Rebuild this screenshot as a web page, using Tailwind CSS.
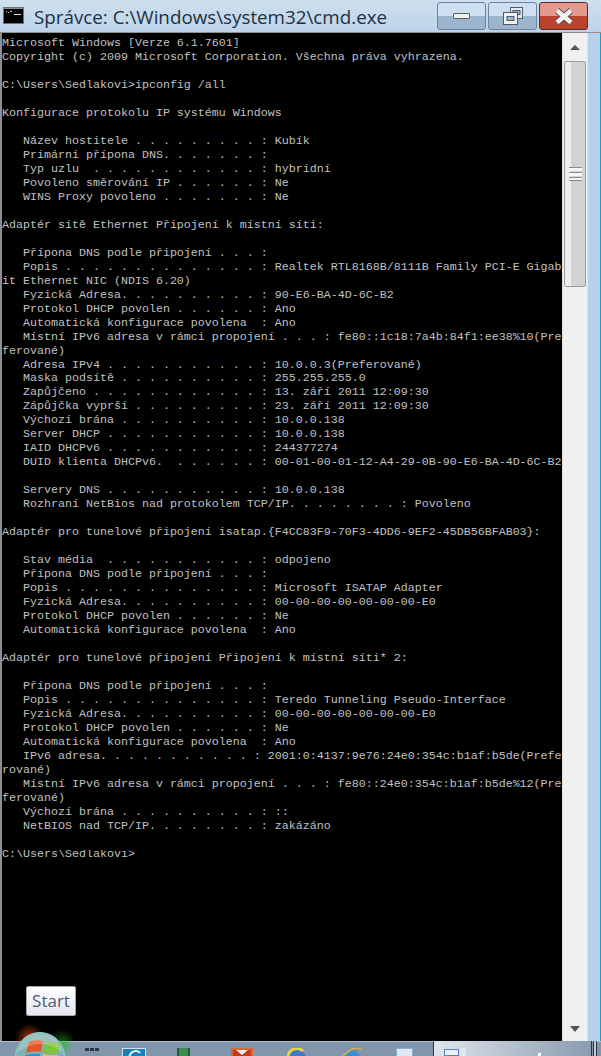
<!DOCTYPE html>
<html lang="en">
<head>
    <meta charset="UTF-8">
    <meta name="viewport" content="width=device-width, initial-scale=1.0">
    <title>Správce: C:\Windows\system32\cmd.exe</title>
    <script src="https://cdn.jsdelivr.net/npm/@tailwindcss/browser@4"></script>
</head>
<body class="bg-black">

<div class="relative w-[601px] h-[1056px] overflow-hidden flex flex-col bg-black">

    <!-- title bar -->
    <div class="h-[33px] shrink-0 flex items-start bg-gradient-to-b from-[#cfdfee] to-[#bcd4ea] border-b border-[#8a8f94]">
        <div class="ml-[3px] mt-[7px] w-[21px] h-[17px] bg-black border border-[#6d7178] shadow-[inset_0_1px_0_#8a8f94]">
            <svg width="19" height="15" viewBox="0 0 19 15"><path d="M2 3h1v1H2zM4 4h1v1H4zM6 3h2v1H6zM10 6h7v1h-7z" fill="#d8d8d8"/></svg>
        </div>
        <div class="ml-[10px] mt-[3px] text-[18.8px] leading-[29px] text-[#20303f] font-['Open_Sans','Noto_Sans',sans-serif] whitespace-nowrap">Správce: C:\Windows\system32\cmd.exe</div>
        <div class="ml-auto mr-[13px] mt-[2px] flex gap-[2px]">
            <div class="w-[49px] h-[28px] rounded-[3px] border border-[#6f8299] bg-gradient-to-b from-[#cddff0] from-50% to-[#9cb5cf] to-50% flex items-center justify-center">
                <div class="w-[17px] h-[6px] bg-[#f2f2f2] border border-[#55606c] rounded-[1px]"></div>
            </div>
            <div class="w-[49px] h-[28px] rounded-[3px] border border-[#6f8299] bg-gradient-to-b from-[#cddff0] from-50% to-[#9cb5cf] to-50% flex items-center justify-center">
                <svg width="22" height="20" viewBox="0 0 22 20"><rect x="8.5" y="1.5" width="12" height="11" fill="#e8e8e8" stroke="#4f5a66"/><rect x="11" y="4.5" width="7" height="4" fill="#9cb5cf" stroke="#4f5a66"/><rect x="1.5" y="6.5" width="14" height="12" fill="#f0f0f0" stroke="#4f5a66"/><rect x="5" y="10.5" width="7" height="4" fill="#9cb5cf" stroke="#4f5a66"/></svg>
            </div>
            <div class="w-[49px] h-[28px] rounded-[3px] border border-[#5c2a2a] bg-gradient-to-b from-[#e39a8e] from-50% to-[#b9432c] to-50% flex items-center justify-center">
                <svg width="20" height="17" viewBox="0 0 20 17"><path d="M3 2.5 L17 14.5 M17 2.5 L3 14.5" stroke="#5d4a48" stroke-width="6.5"/><path d="M3 2.5 L17 14.5 M17 2.5 L3 14.5" stroke="#f0f0f0" stroke-width="4.5"/></svg>
            </div>
        </div>
    </div>

    <!-- console and scrollbar -->
    <div class="flex flex-1 min-h-0">
        <div class="w-[2px] shrink-0 bg-[#8d9093]"></div>
        <pre class="w-[560px] shrink-0 pt-[3px] overflow-hidden bg-black text-[#c0c0c0] text-[11.67px] leading-[14px] font-['Liberation_Mono','DejaVu_Sans_Mono',monospace]">Microsoft Windows [Verze 6.1.7601]
Copyright (c) 2009 Microsoft Corporation. Všechna práva vyhrazena.

C:\Users\Sedlakovi>ipconfig /all

Konfigurace protokolu IP systému Windows

   Název hostitele . . . . . . . . . : Kubík
   Primární přípona DNS. . . . . . . :
   Typ uzlu  . . . . . . . . . . . . : hybridní
   Povoleno směrování IP . . . . . . : Ne
   WINS Proxy povoleno . . . . . . . : Ne

Adaptér sítě Ethernet Připojení k místní síti:

   Přípona DNS podle připojení . . . :
   Popis . . . . . . . . . . . . . . : Realtek RTL8168B/8111B Family PCI-E Gigab
it Ethernet NIC (NDIS 6.20)
   Fyzická Adresa. . . . . . . . . . : 90-E6-BA-4D-6C-B2
   Protokol DHCP povolen . . . . . . : Ano
   Automatická konfigurace povolena  : Ano
   Místní IPv6 adresa v rámci propojení . . . : fe80::1c18:7a4b:84f1:ee38%10(Pre
ferované)
<span class="block h-[13px] overflow-hidden">   Adresa IPv4 . . . . . . . . . . . : 10.0.0.3(Preferované)</span>   Maska podsítě . . . . . . . . . . : 255.255.255.0
   Zapůjčeno . . . . . . . . . . . . : 13. září 2011 12:09:30
   Zápůjčka vyprší . . . . . . . . . : 23. září 2011 12:09:30
   Výchozí brána . . . . . . . . . . : 10.0.0.138
   Server DHCP . . . . . . . . . . . : 10.0.0.138
   IAID DHCPv6 . . . . . . . . . . . : 244377274
   DUID klienta DHCPv6.  . . . . . . : 00-01-00-01-12-A4-29-0B-90-E6-BA-4D-6C-B2

   Servery DNS . . . . . . . . . . . : 10.0.0.138
   Rozhraní NetBios nad protokolem TCP/IP. . . . . . . . : Povoleno

Adaptér pro tunelové připojení isatap.{F4CC83F9-70F3-4DD6-9EF2-45DB56BFAB03}:

   Stav média  . . . . . . . . . . . : odpojeno
   Přípona DNS podle připojení . . . :
   Popis . . . . . . . . . . . . . . : Microsoft ISATAP Adapter
   Fyzická Adresa. . . . . . . . . . : 00-00-00-00-00-00-00-E0
   Protokol DHCP povolen . . . . . . : Ne
   Automatická konfigurace povolena  : Ano

Adaptér pro tunelové připojení Připojení k místní síti* 2:

   Přípona DNS podle připojení . . . :
   Popis . . . . . . . . . . . . . . : Teredo Tunneling Pseudo-Interface
   Fyzická Adresa. . . . . . . . . . : 00-00-00-00-00-00-00-E0
   Protokol DHCP povolen . . . . . . : Ne
   Automatická konfigurace povolena  : Ano
   IPv6 adresa. . . . . . . . . . . : 2001:0:4137:9e76:24e0:354c:b1af:b5de(Prefe
rované)
   Místní IPv6 adresa v rámci propojení . . . : fe80::24e0:354c:b1af:b5de%12(Pre
ferované)
   Výchozí brána . . . . . . . . . . : ::
   NetBIOS nad TCP/IP. . . . . . . . : zakázáno

C:\Users\Sedlakovi></pre>

        <!-- scrollbar -->
        <div class="w-[26px] shrink-0 flex flex-col bg-[#f0f0f0] border-x border-[#e2e2e2]">
            <div class="h-[28px] shrink-0 flex items-center justify-center">
                <div class="w-0 h-0 border-x-[5px] border-x-transparent border-b-[5px] border-b-[#555]"></div>
            </div>
            <div class="h-[226px] shrink-0 mx-px rounded-[2px] border border-[#9a9a9a] bg-gradient-to-r from-[#eeeeee] from-30% to-[#d2d2d2] to-30% flex items-center justify-center">
                <div class="w-[13px] flex flex-col gap-px">
                    <div class="h-[4px] bg-[#f4f4f4] border-t border-[#8c8c8c]"></div>
                    <div class="h-[4px] bg-[#f4f4f4] border-t border-[#8c8c8c]"></div>
                    <div class="h-[4px] bg-[#f4f4f4] border-y border-[#8c8c8c]"></div>
                </div>
            </div>
            <div class="flex-1"></div>
            <div class="h-[22px] shrink-0 flex items-start pt-[7px] justify-center">
                <div class="w-0 h-0 border-x-[5px] border-x-transparent border-t-[6px] border-t-[#555]"></div>
            </div>
        </div>

        <!-- window frame on the right -->
        <div class="flex-1 bg-[#b8d1ea] border-r border-[#16a0c8]"></div>
    </div>

    <!-- taskbar -->
    <div class="h-[15px] shrink-0 flex items-start bg-[#8296ab] border-t border-[#b4c0cc]">
        <div class="ml-[85px] mt-[6px] flex gap-px">
            <div class="w-[4px] h-[3px] bg-[#2c3640]"></div>
            <div class="w-[4px] h-[3px] bg-[#2c3640]"></div>
            <div class="w-[4px] h-[3px] bg-[#2c3640]"></div>
        </div>
        <svg class="ml-[23px] mt-[6px]" width="24" height="9" viewBox="0 0 24 9"><rect width="24" height="9" fill="#1a7fb5"/><rect x="0.5" y="0.5" width="23" height="9" fill="none" stroke="#cfe4f2"/><path d="M7 9 Q9 3 14 3 Q17 3 18 5" stroke="#e8f2f8" stroke-width="2" fill="none"/></svg>
        <div class="ml-[31px] mt-[6px] w-[13px] h-[9px] bg-[#3a8a52] border-x-2 border-[#1f5f33]"></div>
        <div class="ml-[41px] mt-[6px] w-[22px] h-[9px] bg-[#c8391c] border-x-2 border-t-2 border-[#e0672c] flex justify-center">
            <div class="w-0 h-0 border-x-[6px] border-x-transparent border-t-[5px] border-t-[#f0f0f0]"></div>
        </div>
        <svg class="ml-[32px] mt-[6px]" width="21" height="9" viewBox="0 0 21 9"><circle cx="11" cy="11" r="10" fill="#3f78c4"/><path d="M3 8a9 9 0 0 1 15-5" stroke="#e8d44a" stroke-width="3" fill="none"/></svg>
        <svg class="ml-[36px] mt-[6px]" width="20" height="9" viewBox="0 0 20 9"><circle cx="10" cy="10" r="8" fill="#3d8fd4"/><path d="M1 8 Q12 -3 19 1" stroke="#e4b431" stroke-width="1.5" fill="none"/></svg>
        <div class="ml-[34px] mt-[6px] w-[17px] h-[9px] bg-[#dfe8f2] border border-[#7fb0d8]"></div>
        <div class="ml-[20px] -mt-px w-[159px] h-[15px] bg-gradient-to-r from-[#dfe5eb] to-[#8a9cb0] border-x border-[#333] relative">
            <div class="absolute left-[10px] top-[8px] w-[15px] h-[7px] bg-[#eef2f8] border border-[#5c7fb8]"></div>
            <div class="absolute left-[26px] top-[7px] w-[6px] h-[8px] bg-[#dfe6ee]"></div>
            <div class="absolute left-[104px] top-[12px] w-[3px] h-[3px] bg-white"></div>
        </div>
        <div class="ml-px -mt-px w-[4px] h-[15px] bg-[#c0ccd8] border-x border-[#333]"></div>
    </div>

    <!-- seams where the photo clips the text -->
    <div class="absolute left-[2px] top-[46px] w-[300px] h-px bg-black"></div>
    <div class="absolute left-[2px] top-[849px] w-[150px] h-px bg-black"></div>
    <div class="absolute left-[2px] top-[857px] w-[150px] h-px bg-black"></div>

    <!-- Start tooltip -->
    <div class="absolute left-[26px] top-[986px] w-[50px] h-[30px] rounded-[2px] border border-[#a8a8a8] bg-gradient-to-b from-white to-[#e4e5f0] flex items-center justify-center text-[17px] text-[#4c5c70] font-['Open_Sans','Noto_Sans',sans-serif]">Start</div>

    <!-- Start orb: glow over the black console, then the glass ball -->
    <div class="absolute left-[8px] top-[1024px] w-[64px] h-[32px] bg-[radial-gradient(circle_at_34%_45%,rgba(255,80,10,0.7),transparent_32%),radial-gradient(circle_at_85%_60%,rgba(30,190,30,0.55),transparent_24%)]"></div>
    <svg class="absolute left-[15px] top-[1032px]" width="50" height="24" viewBox="0 0 50 24">
        <circle cx="25" cy="25" r="24.5" fill="#7fb3ae" stroke="#8ed0dc"/>
        <path d="M14 10 Q20 7 28 9 L26 20 Q20 18 11 21 Z" fill="#e8552a"/>
        <path d="M30 9 Q37 12 45 10 L43 21 Q35 23 28 20 Z" fill="#7cc23c"/>
        <path d="M11 23 Q18 21 25 22 L25 24 L10 24 Z" fill="#2f8fd8"/>
        <path d="M28 22 Q35 24 42 23 L42 24 L28 24 Z" fill="#f4c430"/>
        <path d="M3 20 Q5 3 25 1 Q45 3 47 20 Q25 4 3 20 Z" fill="#ffffff" fill-opacity="0.22"/>
    </svg>
</div>

</body>
</html>
